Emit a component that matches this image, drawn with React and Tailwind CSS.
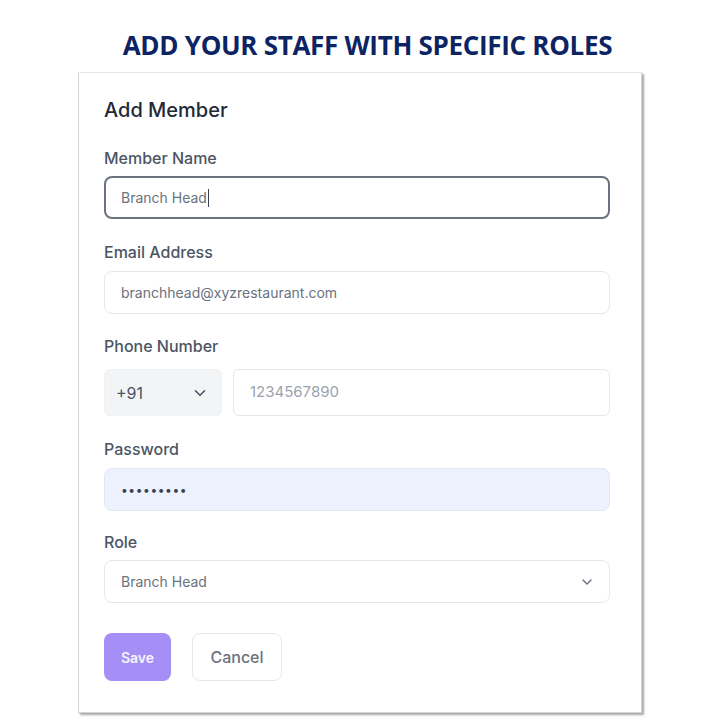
import React from "react";

function Chevron({ className }) {
  return (
    <svg className={className} viewBox="0 0 20 20" fill="none" stroke="currentColor" strokeWidth="1.8" strokeLinecap="round" strokeLinejoin="round">
      <path d="M5 7.5l5 5 5-5" />
    </svg>
  );
}

function Label({ children }) {
  return <div className="text-[16px] leading-[24px] text-[#4b5563] font-medium">{children}</div>;
}

export default function App() {
  return (
    <div className="w-[720px] h-[720px] bg-white overflow-hidden" style={{ fontFamily: "Inter, 'Noto Sans', sans-serif" }}>
      <div className="h-[72px] flex items-start justify-center pt-[29px] pl-[15px]">
        <h1 className="text-[26px] leading-[32px] font-bold text-[#0c2463] tracking-[-0.3px]" style={{ fontFamily: "'Open Sans', sans-serif" }}>
          ADD YOUR STAFF WITH SPECIFIC ROLES
        </h1>
      </div>
      <div className="ml-[78px] w-[564px] h-[641px] bg-white border border-[#d1d5db] border-t-[#e5e7eb] shadow-[2px_2px_2px_rgba(0,0,0,0.35)] pl-[25px] pr-[31px] pt-[23px]">
        <div className="text-[20px] leading-[28px] text-[#1f2937] font-medium">Add Member</div>
        <div className="mt-[22px]">
          <Label>Member Name</Label>
          <div className="mt-[6px] h-[43px] rounded-[8px] border-2 border-[#6b7280] flex items-center px-[15px] text-[14px] text-[#6b7280]">
            Branch Head<span className="ml-[1px] inline-block w-[1px] h-[18px] bg-[#374151]"></span>
          </div>
        </div>
        <div className="mt-[21px]">
          <Label>Email Address</Label>
          <div className="mt-[7px] h-[43px] rounded-[8px] border border-[#e5e7eb] flex items-center px-[16px] text-[14px] text-[#6b7280]">
            branchhead@xyzrestaurant.com
          </div>
        </div>
        <div className="mt-[20px]">
          <Label>Phone Number</Label>
          <div className="mt-[11px] flex gap-[11px]">
            <div className="w-[118px] h-[47px] rounded-[6px] bg-[#f3f4f6] border border-[#f0f1f3] flex items-center justify-between pl-[11px] pr-[12px] text-[16px] text-[#4b5563]">
              <span>+91</span>
              <Chevron className="w-[18px] h-[18px] text-[#4b5563]" />
            </div>
            <div className="flex-1 h-[47px] rounded-[6px] border border-[#e5e7eb] flex items-center px-[16px] text-[15px] text-[#9ca3af]">
              1234567890
            </div>
          </div>
        </div>
        <div className="mt-[21px]">
          <Label>Password</Label>
          <div className="mt-[7px] h-[43px] rounded-[8px] border border-[#e0e7f5] bg-[#edf2fe] flex items-center px-[16px] text-[12px] text-[#374151] tracking-[0.6px]">
            <span>•••••••••</span>
          </div>
        </div>
        <div className="mt-[19px]">
          <Label>Role</Label>
          <div className="mt-[6px] h-[43px] rounded-[8px] border border-[#e5e7eb] flex items-center justify-between pl-[16px] pr-[14px] text-[14px] text-[#6b7280]">
            <span>Branch Head</span>
            <Chevron className="w-[16px] h-[16px] text-[#6b7280]" />
          </div>
        </div>
        <div className="mt-[30px] flex gap-[21px]">
          <button className="w-[67px] h-[48px] rounded-[8px] bg-[#a58ff6] text-white/90 text-[14px] font-semibold">Save</button>
          <button className="w-[90px] h-[48px] rounded-[8px] border border-[#e5e7eb] bg-white text-[#6b7280] text-[16px] font-medium">Cancel</button>
        </div>
      </div>
    </div>
  );
}
